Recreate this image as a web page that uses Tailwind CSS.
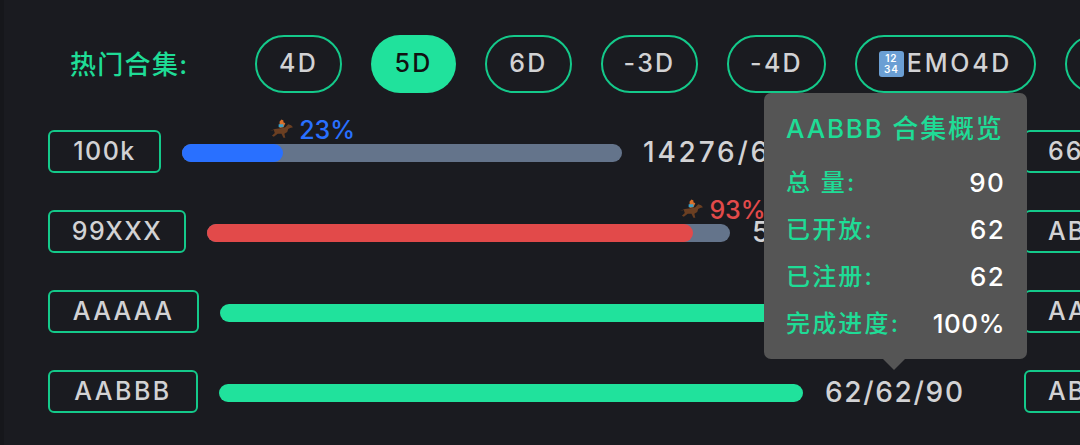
<!DOCTYPE html>
<html lang="en">
<head>
  <meta charset="UTF-8" />
  <title>热门合集</title>
  <script src="https://cdn.jsdelivr.net/npm/@tailwindcss/browser@4"></script>
</head>
<body class="bg-[#1a1b20] m-0">
  <div class="relative w-[1080px] h-[445px] overflow-hidden border-l-4 border-[#16171b] font-['Inter','Noto_Sans_CJK_SC',sans-serif] text-[#d2d2d4]">
    <div class="flex flex-col gap-[37px] pt-[35px] pl-[44px]">

      <!-- filter pills -->
      <div class="flex items-center h-[58px] whitespace-nowrap">
        <div class="ml-[22px] w-[185px] shrink-0 text-[26px] font-medium text-[#1fdc96] tracking-[0.05em]">热门合集:</div>
        <div class="flex shrink-0 gap-[29px] text-[25px] font-medium tracking-[0.09em]">
          <div class="flex items-center justify-center w-[87px] h-[58px] shrink-0 rounded-full border-2 border-[#14c98a]">4D</div>
          <div class="flex items-center justify-center w-[85px] h-[58px] shrink-0 rounded-full bg-[#20e29c] text-[#111]">5D</div>
          <div class="flex items-center justify-center w-[87px] h-[58px] shrink-0 rounded-full border-2 border-[#14c98a]">6D</div>
          <div class="flex items-center justify-center w-[97px] h-[58px] shrink-0 rounded-full border-2 border-[#14c98a]">-3D</div>
          <div class="flex items-center justify-center w-[99px] h-[58px] shrink-0 rounded-full border-2 border-[#14c98a]">-4D</div>
          <div class="flex items-center justify-center w-[181px] h-[58px] shrink-0 rounded-full border-2 border-[#14c98a] tracking-[0.11em]">
            <span class="flex flex-col items-center justify-center w-[25px] h-[26px] mr-[3px] rounded-[3px] bg-[#6b9fd4] text-white text-[10px] leading-[11px] font-semibold tracking-[0.08em]"><span>12</span><span>34</span></span>EMO4D
          </div>
          <div class="w-[90px] h-[58px] shrink-0 rounded-full border-2 border-[#14c98a]"></div>
        </div>
      </div>

      <!-- 100k -->
      <div class="flex items-center h-[43px] whitespace-nowrap">
        <div class="flex items-center justify-center w-[113px] h-[43px] shrink-0 rounded-[6px] border-2 border-[#14c98a] text-[25px] font-medium tracking-[0.06em]">100k</div>
        <div class="relative w-[440px] h-[18px] ml-[21px] mt-[3px] shrink-0 rounded-full bg-[#64748b]">
          <div class="relative h-full rounded-full bg-[#2970ff]" style="width: 23%">
            <div class="absolute left-[calc(100%-13px)] bottom-[17px] flex items-center gap-[6px] text-[25px] leading-[30px] font-medium text-[#2970ff]">
              <svg class="w-[23px] h-[22px]" viewBox="0 0 24 22"><path d="M0 12l5-2 8-1 3-1 3-3 3 1 2 2-3 1-2 1-1 3-3 2 1 4-2 0-2-4-4 0-4 3-2-1 3-3-1-3z" fill="#6b3f22"/><path d="M10 2l2-2 2 1 0 2 2 1-2 4-4 1z" fill="#d9702c"/><path d="M9 5h5v3H9z" fill="#3a9fc4"/></svg>
              <span>23%</span>
            </div>
          </div>
        </div>
        <div class="ml-[21px] text-[28px] font-medium tracking-[0.1em]">14276/62000</div>
        <div class="absolute left-[1020px] flex items-center w-[116px] h-[43px] pl-[22px] rounded-[6px] border-2 border-[#14c98a] bg-[#1a1b20] text-[25px] font-medium tracking-[0.08em]">66XXX</div>
      </div>

      <!-- 99XXX -->
      <div class="flex items-center h-[43px] whitespace-nowrap">
        <div class="flex items-center justify-center w-[138px] h-[43px] shrink-0 rounded-[6px] border-2 border-[#14c98a] text-[25px] font-medium tracking-[0.06em]">99XXX</div>
        <div class="relative w-[523px] h-[18px] ml-[21px] mt-[3px] shrink-0 rounded-full bg-[#64748b]">
          <div class="relative h-full rounded-full bg-[#e24a4a]" style="width: 93%">
            <div class="absolute left-[calc(100%-13px)] bottom-[17px] flex items-center gap-[6px] text-[25px] leading-[30px] font-medium text-[#e24a4a]">
              <svg class="w-[23px] h-[22px]" viewBox="0 0 24 22"><path d="M0 12l5-2 8-1 3-1 3-3 3 1 2 2-3 1-2 1-1 3-3 2 1 4-2 0-2-4-4 0-4 3-2-1 3-3-1-3z" fill="#6b3f22"/><path d="M10 2l2-2 2 1 0 2 2 1-2 4-4 1z" fill="#d9702c"/><path d="M9 5h5v3H9z" fill="#3a9fc4"/></svg>
              <span>93%</span>
            </div>
          </div>
        </div>
        <div class="ml-[22px] text-[28px] font-medium tracking-[0.05em]">56/60/90</div>
        <div class="absolute left-[1020px] flex items-center w-[116px] h-[43px] pl-[22px] rounded-[6px] border-2 border-[#14c98a] bg-[#1a1b20] text-[25px] font-medium tracking-[0.08em]">ABCDE</div>
      </div>

      <!-- AAAAA -->
      <div class="flex items-center h-[43px] whitespace-nowrap">
        <div class="flex items-center justify-center w-[151px] h-[43px] shrink-0 rounded-[6px] border-2 border-[#14c98a] text-[25px] font-medium tracking-[0.09em]">AAAAA</div>
        <div class="w-[584px] h-[18px] ml-[21px] mt-[3px] shrink-0 rounded-full bg-[#20e29c]"></div>
        <div class="absolute left-[1020px] flex items-center w-[116px] h-[43px] pl-[22px] rounded-[6px] border-2 border-[#14c98a] bg-[#1a1b20] text-[25px] font-medium tracking-[0.08em]">AAAAB</div>
      </div>

      <!-- AABBB -->
      <div class="flex items-center h-[43px] whitespace-nowrap">
        <div class="flex items-center justify-center w-[150px] h-[43px] shrink-0 rounded-[6px] border-2 border-[#14c98a] text-[25px] font-medium tracking-[0.1em]">AABBB</div>
        <div class="w-[584px] h-[18px] ml-[21px] mt-[3px] shrink-0 rounded-full bg-[#20e29c]"></div>
        <div class="ml-[22px] text-[28px] font-medium tracking-[0.06em]">62/62/90</div>
        <div class="absolute left-[1020px] flex items-center w-[116px] h-[43px] pl-[22px] rounded-[6px] border-2 border-[#14c98a] bg-[#1a1b20] text-[25px] font-medium tracking-[0.08em]">ABBBB</div>
      </div>
    </div>

    <!-- tooltip -->
    <div class="absolute left-[760px] top-[93px] w-[263px] h-[266px] px-[22px] pt-[18px] rounded-[7px] bg-[#555555] whitespace-nowrap">
      <div class="h-[36px] leading-[36px] text-[26px] font-medium text-[#1fdc96] tracking-[0.07em]">AABBB 合集概览</div>
      <div class="mt-[12px] flex flex-col text-[24px] font-medium">
        <div class="flex justify-between items-center h-[47px]"><span class="text-[#1fdc96] tracking-[0.09em]">总 量:</span><span class="text-white text-[26px] tracking-[0.05em]">90</span></div>
        <div class="flex justify-between items-center h-[47px]"><span class="text-[#1fdc96] tracking-[0.09em]">已开放:</span><span class="text-white text-[26px] tracking-[0.05em]">62</span></div>
        <div class="flex justify-between items-center h-[47px]"><span class="text-[#1fdc96] tracking-[0.09em]">已注册:</span><span class="text-white text-[26px] tracking-[0.05em]">62</span></div>
        <div class="flex justify-between items-center h-[47px]"><span class="text-[#1fdc96] tracking-[0.09em]">完成进度:</span><span class="text-white text-[26px] tracking-[0.02em]">100%</span></div>
      </div>
      <div class="absolute left-[119px] top-full w-0 h-0 border-x-[11px] border-x-transparent border-t-[11px] border-t-[#555555]"></div>
    </div>
  </div>
</body>
</html>
